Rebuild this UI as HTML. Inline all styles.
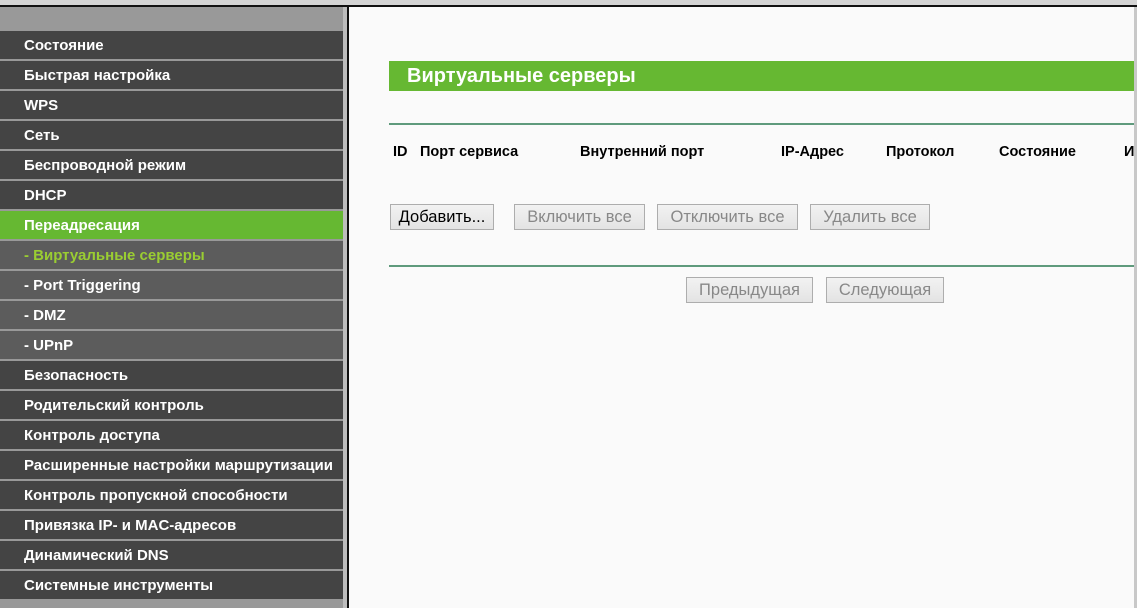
<!DOCTYPE html>
<html><head><meta charset="utf-8"><style>
*{margin:0;padding:0;box-sizing:border-box}
body{width:1137px;height:608px;background:#d4d4d4;position:relative;overflow:hidden;font-family:"Liberation Sans",Arial,sans-serif}
#top{position:absolute;left:0;top:5px;width:1137px;height:2px;background:#111}
#side{position:absolute;left:0;top:7px;width:343px;height:601px;background:#999}
.it{position:absolute;left:0;width:343px;height:28px;background:#444;color:#fff;font-weight:bold;font-size:15px;line-height:30px;padding-left:24px;white-space:nowrap}
.sub{background:#5c5c5c}
.act{background:#66b832}
.g{color:#9acd32}
#gap{position:absolute;left:343px;top:7px;width:4px;height:601px;background:#bdbdbd}
#vl{position:absolute;left:347px;top:7px;width:2px;height:601px;background:#111}
#main{position:absolute;left:349px;top:7px;width:785px;height:601px;background:#fafafa}
#rb{position:absolute;left:1134px;top:7px;width:3px;height:601px;background:#c8c8c8}
#bar{position:absolute;left:389px;top:61px;width:745px;height:30px;background:#66b832;color:#fff;font-weight:bold;font-size:20px;line-height:30px;padding-left:18px}
.ln{position:absolute;left:389px;width:745px;height:2px;background:#5f9a7c}
.th{position:absolute;top:144px;font-size:14.5px;font-weight:bold;color:#000}
.btn{position:absolute;height:26px;border:1px solid #adadad;background:linear-gradient(#f2f2f2,#e3e3e3);font-size:16.5px;line-height:25px;text-align:center;color:#888;white-space:nowrap}
</style></head><body>
<div id="top"></div>
<div id="side">
<div class="it" style="top:24px">Состояние</div>
<div class="it" style="top:54px">Быстрая настройка</div>
<div class="it" style="top:84px">WPS</div>
<div class="it" style="top:114px">Сеть</div>
<div class="it" style="top:144px">Беспроводной режим</div>
<div class="it" style="top:174px">DHCP</div>
<div class="it act" style="top:204px">Переадресация</div>
<div class="it sub g" style="top:234px">- Виртуальные серверы</div>
<div class="it sub" style="top:264px">- Port Triggering</div>
<div class="it sub" style="top:294px">- DMZ</div>
<div class="it sub" style="top:324px">- UPnP</div>
<div class="it" style="top:354px">Безопасность</div>
<div class="it" style="top:384px">Родительский контроль</div>
<div class="it" style="top:414px">Контроль доступа</div>
<div class="it" style="top:444px">Расширенные настройки маршрутизации</div>
<div class="it" style="top:474px">Контроль пропускной способности</div>
<div class="it" style="top:504px">Привязка IP- и MAC-адресов</div>
<div class="it" style="top:534px">Динамический DNS</div>
<div class="it" style="top:564px">Системные инструменты</div>
</div>
<div id="gap"></div><div id="vl"></div>
<div id="main"></div><div id="rb"></div>
<div id="bar">Виртуальные серверы</div>
<div class="ln" style="top:123px"></div>
<div class="th" style="left:393px">ID</div>
<div class="th" style="left:420px">Порт сервиса</div>
<div class="th" style="left:580px">Внутренний порт</div>
<div class="th" style="left:781px">IP-Адрес</div>
<div class="th" style="left:886px">Протокол</div>
<div class="th" style="left:999px">Состояние</div>
<div class="th" style="left:1124px">И</div>
<div class="btn" style="left:390px;top:204px;width:104px;color:#000">Добавить...</div>
<div class="btn" style="left:514px;top:204px;width:131px">Включить все</div>
<div class="btn" style="left:657px;top:204px;width:141px">Отключить все</div>
<div class="btn" style="left:810px;top:204px;width:120px">Удалить все</div>
<div class="ln" style="top:265px"></div>
<div class="btn" style="left:686px;top:277px;width:127px">Предыдущая</div>
<div class="btn" style="left:826px;top:277px;width:118px">Следующая</div>
</body></html>
